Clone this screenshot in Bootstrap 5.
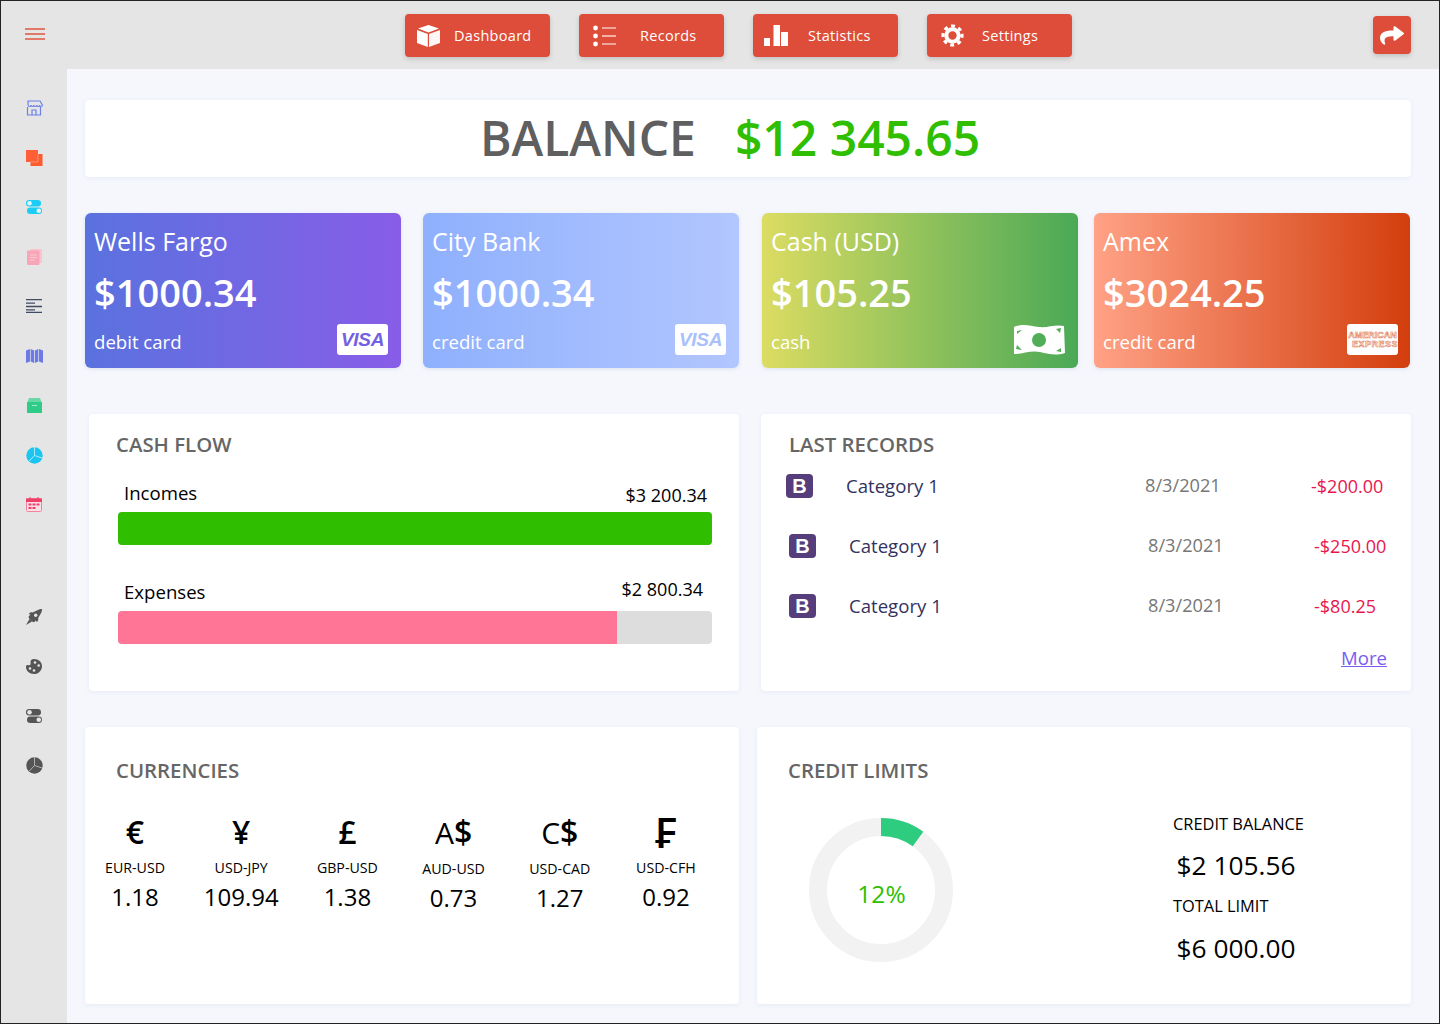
<!DOCTYPE html>
<html lang="en">
<head>
  <meta charset="UTF-8">
  <meta name="viewport" content="width=device-width, initial-scale=1.0">
  <title>Finance Dashboard</title>
  <link href="https://cdn.jsdelivr.net/npm/bootstrap@5.3.0/dist/css/bootstrap.min.css" rel="stylesheet">
  <style>
    body { background: #fff; font-family: "Open Sans", "Noto Sans", sans-serif; color: #000; }
    .app-frame { width: 1440px; height: 1024px; border: 1px solid #222; background: #f5f7fd; overflow: hidden; }
    .side-rail { width: 66px; flex: none; background: #e5e5e5; padding-top: 23px; }
    .rail-item { height: 20px; width: 100%; display: flex; align-items: center; justify-content: center; margin-bottom: 29.6px; }
    .rail-item svg { display: block; }
    .rail-first { margin-bottom: 54px; padding-left: 2px; }
    .rail-gap { margin-bottom: 92px; }
    .top-strip { height: 68px; background: #e5e5e5; padding: 13px 28px 0 338px; }
    .nav-btn { width: 145px; height: 43px; background: #dd4d39; color: #fff; border: 0; border-radius: 4px; font-size: 14.5px; letter-spacing: .3px; box-shadow: 0 2px 5px rgba(0,0,0,.16); display: flex; align-items: center; padding: 0; margin-right: 29px; }
    .nav-btn:hover { background: #dd4d39; color: #fff; }
    .nav-ico { flex: none; display: flex; justify-content: flex-start; }
    .ico-dash { width: 49px; padding-left: 12px; }
    .ico-rec { width: 61px; padding-left: 14px; }
    .ico-stat { width: 55px; padding-left: 11px; }
    .ico-set { width: 55px; padding-left: 14px; }
    .share-btn { width: 38px; height: 38px; background: #dd4d39; border: 0; border-radius: 4px; margin-left: auto; margin-top: 2px; padding: 0; box-shadow: 0 2px 5px rgba(0,0,0,.16); display: flex; align-items: center; justify-content: center; }
    .main-area { padding: 31px 28px 0 18px; }
    .white-panel { background: #fff; border: 0; border-radius: 4px; box-shadow: 0 1px 4px rgba(60,70,110,.07); }
    .balance-panel { height: 77px; font-size: 48px; font-weight: 600; line-height: 1; padding-right: 36px; padding-bottom: 1px; }
    .balance-word { color: #5f5f5f; margin-right: 39px; }
    .balance-sum { color: #2fbe00; }
    .acct-row { margin-top: 36px; }
    .acct { width: 316px; height: 155px; flex: none; border-radius: 6px; color: #fff; padding: 12px 9px 0; position: relative; box-shadow: 0 1px 4px rgba(60,70,110,.12); }
    .acct:nth-child(2) { margin-left: 22px; }
    .acct:nth-child(3) { margin-left: 23px; }
    .acct:nth-child(4) { margin-left: 16px; }
    .acct-wf { background: linear-gradient(90deg, #5a72de, #885de8); }
    .acct-cb { background: linear-gradient(90deg, #8fb0fd, #b2c6ff); }
    .acct-cash { background: linear-gradient(90deg, #dcdc62, #4aa956); }
    .acct-amex { background: linear-gradient(90deg, #ffa286, #d33e0d); }
    .acct-name { font-size: 25px; line-height: 33px; }
    .acct-sum { font-size: 38px; font-weight: 600; line-height: 50px; margin-top: 9px; }
    .acct-kind { font-size: 18.6px; line-height: 24px; margin-top: 13px; }
    .acct-logo { position: absolute; right: 13px; bottom: 13px; width: 51px; height: 31px; background: #fff; border-radius: 3px; display: flex; flex-direction: column; align-items: center; justify-content: center; }
    .logo-amex { right: 12px; }
    .visa-text { font-family: "Liberation Sans", sans-serif; font-weight: 700; font-style: italic; font-size: 19px; letter-spacing: -.3px; line-height: 1; }
    .visa-deep { color: #7460e2; }
    .visa-pale { color: #a9c0fb; }
    .amex-text { font-family: "Liberation Sans", sans-serif; font-weight: 700; font-size: 9px; line-height: 9px; color: #fff; -webkit-text-stroke: .5px #dd6a40; white-space: nowrap; }
    .amex-text + .amex-text { align-self: flex-end; letter-spacing: .5px; }
    .bill-ico { position: absolute; right: 13px; bottom: 12px; }
    .panel-row { margin-top: 46px; }
    .panel-row-low { margin-top: 36px; }
    .flow-panel { width: 650px; height: 277px; margin-left: 4px; padding: 16px 27px 0; }
    .rec-panel { width: 650px; height: 277px; margin-left: 22px; padding: 16px 25px 0 28px; position: relative; }
    .panel-title { font-size: 20.4px; font-weight: 600; color: #666; line-height: 28px; margin: 0; }
    .flow-label { font-size: 18.6px; line-height: 24px; padding-left: 6px; margin-left: 2px; margin-right: 5px; }
    .flow-in { margin-top: 23px; }
    .flow-out { margin-top: 35px; margin-right: 9px; }
    .flow-in-sum { margin-bottom: -2px; font-size: 18px; }
    .flow-out-sum { margin-top: -3px; font-size: 18px; }
    .flow-bar { height: 33px; margin: 7px 0 0 2px; width: 594px; background: #ddd; border-radius: 4px; }
    .flow-fill-in { background: #2fbe00; }
    .flow-fill-out { background: #ff7596; }
    .rec-line { display: grid; grid-template-columns: 60px 299px 166px 1fr; align-items: center; height: 30px; margin-bottom: 30px; font-size: 18.6px; }
    .rec-line.rec-nudge { margin-left: 3px; }
    .rec-list { margin-top: 13px; margin-left: -3px; }
    .b-mark { width: 27px; height: 24px; background: #563d7c; border-radius: 4px; color: #fff; font-family: "Liberation Sans", sans-serif; font-weight: 700; font-size: 20px; line-height: 24px; text-align: center; }
    .rec-cat { color: #33325e; }
    .rec-date { color: #777; font-size: 18.2px; }
    .rec-sum { color: #e8164f; font-size: 18px; }
    .rec-more { position: absolute; right: 24px; top: 230px; font-size: 18.6px; color: #7a5cf0; }
    .cur-panel { width: 654px; height: 277px; padding: 29px 0 0; }
    .cur-title { padding-left: 31px; }
    .cur-grid { display: grid; grid-template-columns: repeat(6, 100px); column-gap: 6.2px; margin-top: 26px; text-align: center; }
    .cur-sign { font-size: 32px; font-weight: 600; line-height: 44px; }
    .cur-thin { font-weight: 500; font-size: 30px; }
    .cur-franc { font-size: 42px; font-weight: 600; }
    .cur-pair { font-size: 14.2px; line-height: 20px; margin-top: 4px; }
    .cur-rate { font-size: 24px; font-weight: 500; line-height: 36px; margin-top: 1px; }
    .credit-panel { width: 654px; height: 277px; margin-left: 18px; padding: 29px 0 0 31px; position: relative; }
    .donut-box { position: relative; width: 146px; height: 146px; margin: 33px 0 0 20px; }
    .donut-num { position: absolute; inset: 0; display: flex; align-items: center; justify-content: center; color: #2fbe00; font-size: 24.5px; font-weight: 500; padding-top: 8px; padding-left: 1px; }
    .credit-side { position: absolute; left: 416px; top: 86px; width: 126px; }
    .credit-cap { font-size: 16.4px; line-height: 22px; white-space: nowrap; }
    .credit-val { font-size: 26.3px; font-weight: 500; line-height: 34px; white-space: nowrap; text-align: center; margin: 13px 0; }
    .credit-val-low { margin-top: 14px; }
  </style>
</head>
<body class="m-0">
  <div class="app-frame d-flex">
    <aside class="side-rail d-flex flex-column flex-shrink-0">
      <div class="rail-item rail-first">
        <svg width="20" height="12" viewBox="0 0 20 12"><path d="M0 1h20M0 6h20M0 11h20" stroke="#e0553f" stroke-width="1.6"/></svg>
      </div>
      <div class="rail-item">
        <svg width="18" height="16" viewBox="0 0 18 16" fill="none" stroke="#6a80ea" stroke-width="1.2"><path d="M3 1h12l2.400 4c0 2-2.800 2-2.800 0 0 2-2.800 2-2.800 0 0 2-3 2-3 0 0 2-2.800 2-2.800 0 0 2-2.900 2-2.900 0z"/><path d="M2.500 7v8h13V7M7 15v-5h4v5"/></svg>
      </div>
      <div class="rail-item">
        <svg width="17" height="16" viewBox="0 0 17 16"><rect x="4.500" y="4" width="12" height="12" fill="#ff5a2b"/><rect x="0" y="0" width="12" height="12" fill="#ff5f36"/><path d="M12 4v8H4.500" stroke="#f7a089" stroke-width=".8" fill="none"/></svg>
      </div>
      <div class="rail-item">
        <svg width="16" height="14" viewBox="0 0 16 14"><rect width="15" height="6.500" rx="3.200" fill="#1ccdf5"/><rect x="1" y="7.500" width="15" height="6.500" rx="3.200" fill="#1ccdf5"/><circle cx="3.500" cy="3.200" r="2.300" fill="#e2f6fb"/><circle cx="12.800" cy="10.700" r="2.300" fill="#e2f6fb"/></svg>
      </div>
      <div class="rail-item">
        <svg width="15" height="16" viewBox="0 0 15 16"><rect x="3" y="0" width="12" height="14" rx="1" fill="#f9c3cf"/><rect x="0" y="1.500" width="12.500" height="14.500" rx="1" fill="#f7a6b8"/><path d="M3 6h7M3 8.500h7M3 11h5" stroke="#fbd0da" stroke-width=".8"/></svg>
      </div>
      <div class="rail-item">
        <svg width="16" height="14" viewBox="0 0 16 14"><path d="M0 .7h16M0 7.500h16M0 4.200h9M0 10.800h9M0 13.300h16" stroke="#3f4a63" stroke-width="1.300"/></svg>
      </div>
      <div class="rail-item">
        <svg width="17" height="14" viewBox="0 0 17 14" fill="#6c7ae8"><path d="M0 1.500 4 0v12.500L0 14z"/><path d="M4.700 0l3.400 1.500V14l-3.400-1.500z"/><path d="M8.900 1.500 12.300 0v12.500L8.900 14z"/><path d="M13 0l4 1.500V14l-4-1.500z"/></svg>
      </div>
      <div class="rail-item">
        <svg width="15" height="15" viewBox="0 0 15 15"><path d="M2 0h11l1.500 4H.5z" fill="#69d8a6"/><rect y="4" width="15" height="11" fill="#2ecc87"/><path d="M5 7.500h5" stroke="#a4ebc9" stroke-width="1"/></svg>
      </div>
      <div class="rail-item">
        <svg width="17" height="17" viewBox="0 0 17 17"><circle cx="8.500" cy="8.500" r="8.200" fill="#1cc5f0"/><path d="M8.500 0v8.500L16 11M8.500 8.500 2.800 14.500" stroke="#bdeefa" stroke-width=".9" fill="none"/></svg>
      </div>
      <div class="rail-item rail-gap">
        <svg width="16" height="15" viewBox="0 0 16 15"><rect x=".5" y="1.500" width="15" height="13" rx="1" fill="#fbe0e7" stroke="#f3829c" stroke-width="1"/><path d="M0 1.500h16V5H0z" fill="#f0406a"/><path d="M4 0v3M12 0v3" stroke="#f0406a" stroke-width="1"/><path d="M2.500 6.500h3v2h-3zM6.500 6.500h3v2h-3zM10.500 6.500h3v2h-3zM2.500 10h3v2h-3zM6.500 10h3v2h-3z" fill="#f0406a"/></svg>
      </div>
      <div class="rail-item">
        <svg width="16" height="16" viewBox="0 0 16 16" fill="#555"><path d="M16 0c-1.500 0-3.200.3-4.600 1.200L6.500 3.500c-.8-.5-3-.2-3.700 1.500l1.700.7c-1 .5-1.700 1.300-2 2.300 .5 1.900 2.800 4.400 5 5.200 1-.3 1.900-1 2.400-2l.7 1.700c1.700-.7 2-2.900 1.500-3.700l2.700-4.800C15.700 3.200 16 1.500 16 0z"/><circle cx="9.700" cy="6.300" r="1.700" fill="#e5e5e5"/><path d="M3.500 10 0 16l6-3.500z"/></svg>
      </div>
      <div class="rail-item">
        <svg width="16" height="15" viewBox="0 0 16 15" fill="#555"><path d="M8 0c4.500 0 8 3 8 7.200 0 4.300-3.500 7.800-8 7.800S0 12 0 8C0 6 1.500 6 2.500 6.200 4.300 6.500 5 5.500 4.500 3.500 4.200 1.800 5.500 0 8 0z"/><circle cx="9" cy="3.500" r="1.300" fill="#e5e5e5"/><circle cx="12.700" cy="6.500" r="1.300" fill="#e5e5e5"/><circle cx="4" cy="9.500" r="1.300" fill="#e5e5e5"/><circle cx="8" cy="11.500" r="1.300" fill="#e5e5e5"/></svg>
      </div>
      <div class="rail-item">
        <svg width="16" height="14" viewBox="0 0 16 14"><rect width="15" height="6.500" rx="3.200" fill="#555"/><rect x="1" y="7.500" width="15" height="6.500" rx="3.200" fill="#555"/><circle cx="3.500" cy="3.200" r="2.300" fill="#e5e5e5"/><circle cx="12.800" cy="10.700" r="2.300" fill="#e5e5e5"/></svg>
      </div>
      <div class="rail-item">
        <svg width="17" height="17" viewBox="0 0 17 17"><circle cx="8.500" cy="8.500" r="8.200" fill="#555"/><path d="M8.500 0v8.500L16 11M8.500 8.500 2.800 14.500" stroke="#bbb" stroke-width=".9" fill="none"/></svg>
      </div>
    </aside>

    <div class="flex-grow-1">
      <header class="top-strip d-flex align-items-start">
        <button class="btn nav-btn">
          <span class="nav-ico ico-dash"><svg width="23" height="22" viewBox="0 0 23 22" fill="#fff"><path d="M11.500 0 22 3.500l-10.500 4L1 3.500z"/><path d="M0 5l10.800 4v13L0 18z"/><path d="M23 5l-11 4v13l11-4z" opacity=".95"/></svg></span>Dashboard
        </button>
        <button class="btn nav-btn">
          <span class="nav-ico ico-rec"><svg width="23" height="22" viewBox="0 0 23 22" fill="#fff"><circle cx="2.500" cy="3" r="2.400"/><circle cx="2.500" cy="11" r="2.400"/><circle cx="2.500" cy="19" r="2.400"/><path d="M9 3h14M9 19h14" stroke="#fff" stroke-width="1"/><path d="M9 11h14" stroke="#f3b0a5" stroke-width="2"/></svg></span>Records
        </button>
        <button class="btn nav-btn">
          <span class="nav-ico ico-stat"><svg width="25" height="21" viewBox="0 0 25 21" fill="#fff"><rect y="13" width="6" height="8"/><rect x="9.500" y="0" width="6.500" height="21"/><rect x="17" y="7" width="7" height="14"/></svg></span>Statistics
        </button>
        <button class="btn nav-btn">
          <span class="nav-ico ico-set"><svg width="23" height="23" viewBox="0 0 23 23" fill="none" stroke="#fff"><circle cx="11.500" cy="11.500" r="6.200" stroke-width="4"/><circle cx="11.500" cy="11.500" r="9.500" stroke-width="3.200" stroke-dasharray="3.800 3.660" transform="rotate(-10 11.500 11.500)"/></svg></span>Settings
        </button>
        <button class="btn share-btn" aria-label="Share">
          <svg width="24" height="21" viewBox="0 0 512 512" fill="#fff" preserveAspectRatio="none"><path d="M503.691 189.836L327.687 37.851C312.281 24.546 288 35.347 288 56.015v80.053C127.371 137.907 0 170.1 0 322.326c0 61.441 39.581 122.309 83.333 154.132 13.653 9.931 33.111-2.533 28.077-18.631C66.066 312.814 132.917 274.316 288 272.085V360c0 20.7 24.3 31.453 39.687 18.164l176.004-152c11.071-9.562 11.086-26.753 0-36.328z"/></svg>
        </button>
      </header>

      <main class="main-area">
        <div class="white-panel balance-panel d-flex align-items-center justify-content-center">
          <span class="balance-word">BALANCE</span><span class="balance-sum">$12 345.65</span>
        </div>

        <div class="acct-row d-flex">
          <div class="acct acct-wf">
            <div class="acct-name">Wells Fargo</div>
            <div class="acct-sum">$1000.34</div>
            <div class="acct-kind">debit card</div>
            <div class="acct-logo"><span class="visa-text visa-deep">VISA</span></div>
          </div>
          <div class="acct acct-cb">
            <div class="acct-name">City Bank</div>
            <div class="acct-sum">$1000.34</div>
            <div class="acct-kind">credit card</div>
            <div class="acct-logo"><span class="visa-text visa-pale">VISA</span></div>
          </div>
          <div class="acct acct-cash">
            <div class="acct-name">Cash (USD)</div>
            <div class="acct-sum">$105.25</div>
            <div class="acct-kind">cash</div>
            <svg class="bill-ico" width="52" height="32" viewBox="0 0 52 32"><path d="M1 3c9-4 16-1 25 0 9 1 16-3 25-1l1 27c-9 3-16 1-25-1-9-2-17 2-26 2z" fill="#fff"/><circle cx="26" cy="16" r="7" fill="#52ad58"/><path d="M4 7l5-1-5 4zM48 4l-1 5-4-4zM3 25l1-4 5 5zM48 24l-5 3 5 1z" fill="#52ad58"/></svg>
          </div>
          <div class="acct acct-amex">
            <div class="acct-name">Amex</div>
            <div class="acct-sum">$3024.25</div>
            <div class="acct-kind">credit card</div>
            <div class="acct-logo logo-amex"><span class="amex-text">AMERICAN</span><span class="amex-text">EXPRESS</span></div>
          </div>
        </div>

        <div class="panel-row d-flex">
          <section class="white-panel flow-panel">
            <h2 class="panel-title">CASH FLOW</h2>
            <div class="flow-label flow-in d-flex justify-content-between align-items-end">
              <span>Incomes</span><span class="flow-in-sum">$3 200.34</span>
            </div>
            <div class="flow-bar progress"><div class="progress-bar flow-fill-in" style="width:100%"></div></div>
            <div class="flow-label flow-out d-flex justify-content-between align-items-start">
              <span>Expenses</span><span class="flow-out-sum">$2 800.34</span>
            </div>
            <div class="flow-bar progress"><div class="progress-bar flow-fill-out" style="width:84%"></div></div>
          </section>
          <section class="white-panel rec-panel">
            <h2 class="panel-title">LAST RECORDS</h2>
            <div class="rec-list">
              <div class="rec-line">
                <span class="b-mark">B</span><span class="rec-cat">Category 1</span><span class="rec-date">8/3/2021</span><span class="rec-sum">-$200.00</span>
              </div>
              <div class="rec-line rec-nudge">
                <span class="b-mark">B</span><span class="rec-cat">Category 1</span><span class="rec-date">8/3/2021</span><span class="rec-sum">-$250.00</span>
              </div>
              <div class="rec-line rec-nudge">
                <span class="b-mark">B</span><span class="rec-cat">Category 1</span><span class="rec-date">8/3/2021</span><span class="rec-sum">-$80.25</span>
              </div>
            </div>
            <a class="rec-more" href="#">More</a>
          </section>
        </div>

        <div class="panel-row-low d-flex">
          <section class="white-panel cur-panel">
            <h2 class="panel-title cur-title">CURRENCIES</h2>
            <div class="cur-grid">
              <div><div class="cur-sign">€</div><div class="cur-pair">EUR-USD</div><div class="cur-rate">1.18</div></div>
              <div><div class="cur-sign">¥</div><div class="cur-pair">USD-JPY</div><div class="cur-rate">109.94</div></div>
              <div><div class="cur-sign">£</div><div class="cur-pair">GBP-USD</div><div class="cur-rate">1.38</div></div>
              <div><div class="cur-sign"><span class="cur-thin">A</span>$</div><div class="cur-pair">AUD-USD</div><div class="cur-rate">0.73</div></div>
              <div><div class="cur-sign"><span class="cur-thin">C</span>$</div><div class="cur-pair">USD-CAD</div><div class="cur-rate">1.27</div></div>
              <div><div class="cur-sign cur-franc">₣</div><div class="cur-pair">USD-CFH</div><div class="cur-rate">0.92</div></div>
            </div>
          </section>
          <section class="white-panel credit-panel">
            <h2 class="panel-title">CREDIT LIMITS</h2>
            <div class="donut-box">
              <svg width="146" height="146" viewBox="0 0 146 146"><circle cx="73" cy="73" r="63" fill="none" stroke="#f2f2f2" stroke-width="18"/><circle cx="73" cy="73" r="63" fill="none" stroke="#2ecc7f" stroke-width="18" pathLength="100" stroke-dasharray="10 90" transform="rotate(-90 73 73)"/></svg>
              <div class="donut-num">12%</div>
            </div>
            <div class="credit-side">
              <div class="credit-cap">CREDIT BALANCE</div>
              <div class="credit-val">$2 105.56</div>
              <div class="credit-cap">TOTAL LIMIT</div>
              <div class="credit-val credit-val-low">$6 000.00</div>
            </div>
          </section>
        </div>
      </main>
    </div>
  </div>
</body>
</html>
